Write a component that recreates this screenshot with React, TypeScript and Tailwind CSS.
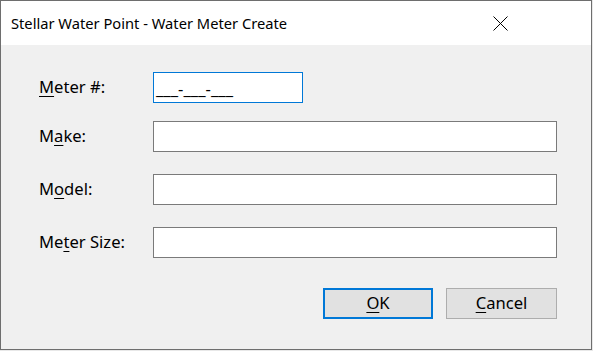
import React from "react";

type Field = {
  before: string;
  key: string;
  after: string;
  width: string;
  top: string;
  value?: string;
  focused?: boolean;
};

const fields: Field[] = [
  { before: "", key: "M", after: "eter #:", width: "w-[150px]", top: "mt-[27px]", value: "___-___-___", focused: true },
  { before: "M", key: "a", after: "ke:", width: "w-[404px]", top: "mt-[18px]" },
  { before: "M", key: "o", after: "del:", width: "w-[404px]", top: "mt-[22px]" },
  { before: "Me", key: "t", after: "er Size:", width: "w-[404px]", top: "mt-[22px]" },
];

function Mnemonic({ before, k, after }: { before: string; k: string; after: string }) {
  return (
    <span>
      {before}
      <span className="underline underline-offset-[3px] decoration-1">{k}</span>
      {after}
    </span>
  );
}

function CloseIcon() {
  return (
    <svg width="15" height="15" viewBox="0 0 15 15" className="block">
      <path d="M0.5 0.5 L14.5 14.5 M14.5 0.5 L0.5 14.5" stroke="#000" strokeWidth="1" fill="none" />
    </svg>
  );
}

export default function App() {
  return (
    <div className="w-[593px] h-[351px] bg-[#e8e8e8]" style={{ fontFamily: '"Noto Sans", sans-serif' }}>
      <div className="w-[592px] h-[350px] border border-[#6e6e6e] flex flex-col bg-[#f0f0f0]">
        <div className="h-[44px] bg-white flex items-center shrink-0">
          <div className="pl-[10px] text-[14.7px] text-black">Stellar Water Point - Water Meter Create</div>
          <div className="flex-1"></div>
          <div className="w-[46px] h-full flex items-center justify-center mr-[68px]">
            <CloseIcon />
          </div>
        </div>
        <div className="flex-1 flex flex-col pl-[38px] text-[16.6px] text-black">
          {fields.map((f) => (
            <div key={f.after} className={`flex flex-row items-center ${f.top}`}>
              <div className="w-[114px]">
                <Mnemonic before={f.before} k={f.key} after={f.after} />
              </div>
              <div
                className={`${f.width} h-[31px] bg-white border flex items-center pl-[2px] ${
                  f.focused ? "border-[#0078d7]" : "border-[#7a7a7a]"
                }`}
              >
                {f.value && <span className="leading-none pt-[4px]">{f.value}</span>}
              </div>
            </div>
          ))}
          <div className="flex flex-row mt-[30px] pl-[284px] gap-[13px]">
            <button className="w-[110px] h-[31px] bg-[#e1e1e1] border-2 border-[#0078d7] flex items-center justify-center">
              <Mnemonic before="" k="O" after="K" />
            </button>
            <button className="w-[111px] h-[31px] bg-[#e1e1e1] border border-[#adadad] flex items-center justify-center">
              <Mnemonic before="" k="C" after="ancel" />
            </button>
          </div>
        </div>
      </div>
    </div>
  );
}
